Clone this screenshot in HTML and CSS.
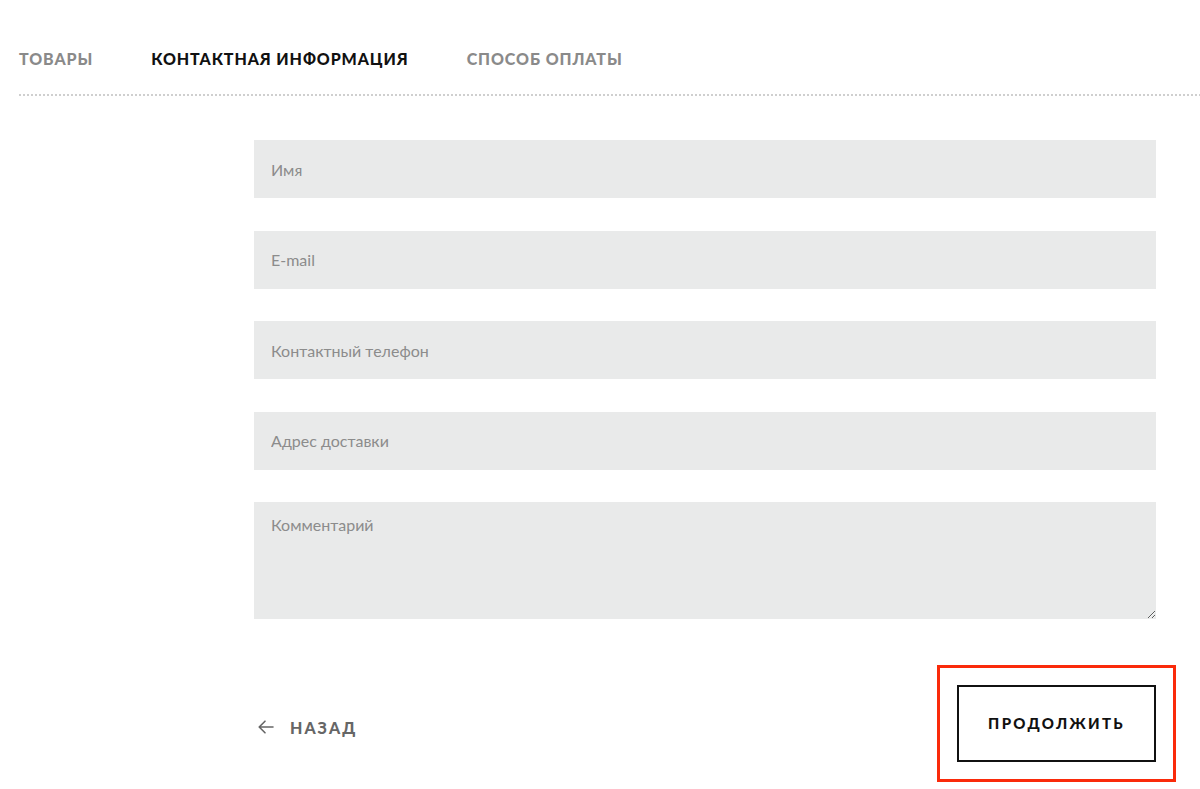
FILE: index.html
```html
<!DOCTYPE html>
<html lang="ru">
<head>
<meta charset="utf-8">
<title>Оформление заказа</title>
<link rel="stylesheet" href="styles.css">
</head>
<body>
<div class="page">
  <nav class="steps">
    <span class="step">Товары</span>
    <span class="step step-active">Контактная информация</span>
    <span class="step">Способ оплаты</span>
  </nav>
  <div class="divider"></div>
  <form class="form">
    <input class="field" type="text" placeholder="Имя">
    <input class="field" type="text" placeholder="E-mail">
    <input class="field" type="text" placeholder="Контактный телефон">
    <input class="field" type="text" placeholder="Адрес доставки">
    <textarea class="field field-area" placeholder="Комментарий"></textarea>
    <div class="actions">
      <a class="back" href="#">
        <svg class="back-icon" width="16" height="14" viewBox="0 0 16 14" fill="none" stroke="#666" stroke-width="1.6" stroke-linecap="round" stroke-linejoin="round"><path d="M15 7H1.5M7 1.2L1.2 7 7 12.8"/></svg>
        <span>Назад</span>
      </a>
      <button class="next" type="button">Продолжить</button>
    </div>
  </form>
</div>
</body>
</html>
```

FILE: styles.css
```css
html, body {
  margin: 0;
  padding: 0;
  background: #fff;
}
body {
  font-family: "Lato", "Open Sans", sans-serif;
  color: #111;
}
.page {
  width: 1200px;
  height: 789px;
  overflow: hidden;
}
.steps {
  display: flex;
  gap: 58px;
  padding: 49px 0 0 19px;
  height: 22px;
}
.step {
  font-family: "Lato", sans-serif;
  font-weight: 900;
  font-size: 16px;
  line-height: 20px;
  letter-spacing: 0.9px;
  text-transform: uppercase;
  color: #8a8a8a;
}
.step-active {
  color: #111;
}
.divider {
  margin: 23px 0 0 19px;
  height: 2px;
  background-image: linear-gradient(to right, #cfcfcf 0 2px, transparent 2px 4px);
  background-size: 4px 2px;
}
.form {
  display: flex;
  flex-direction: column;
  gap: 32.5px;
  margin: 44px 44px 0 254px;
}
.field {
  display: block;
  box-sizing: border-box;
  width: 100%;
  height: 58px;
  margin: 0;
  padding: 0 17px;
  border: none;
  outline: none;
  background: #e9eaea;
  font-family: "Lato", sans-serif;
  font-size: 16px;
  color: #333;
}
.field::placeholder {
  color: #8c8c8c;
  opacity: 1;
}
.field-area {
  height: 117px;
  padding-top: 13px;
  resize: vertical;
}
.actions {
  display: flex;
  justify-content: space-between;
  align-items: center;
  margin-top: 33px;
}
.back {
  display: flex;
  align-items: center;
  gap: 16px;
  margin: 8px 0 0 4px;
  color: #666;
  text-decoration: none;
  font-weight: 900;
  font-size: 16px;
  letter-spacing: 2px;
  text-transform: uppercase;
}
.back-icon {
  display: block;
}
.next {
  box-sizing: border-box;
  width: 199px;
  height: 77px;
  background: #fff;
  border: 2px solid #111;
  font-family: "Lato", sans-serif;
  font-weight: 900;
  font-size: 15px;
  letter-spacing: 2.3px;
  text-transform: uppercase;
  color: #111;
  outline: 3px solid #fa2a0a;
  outline-offset: 17px;
  cursor: pointer;
}
```
